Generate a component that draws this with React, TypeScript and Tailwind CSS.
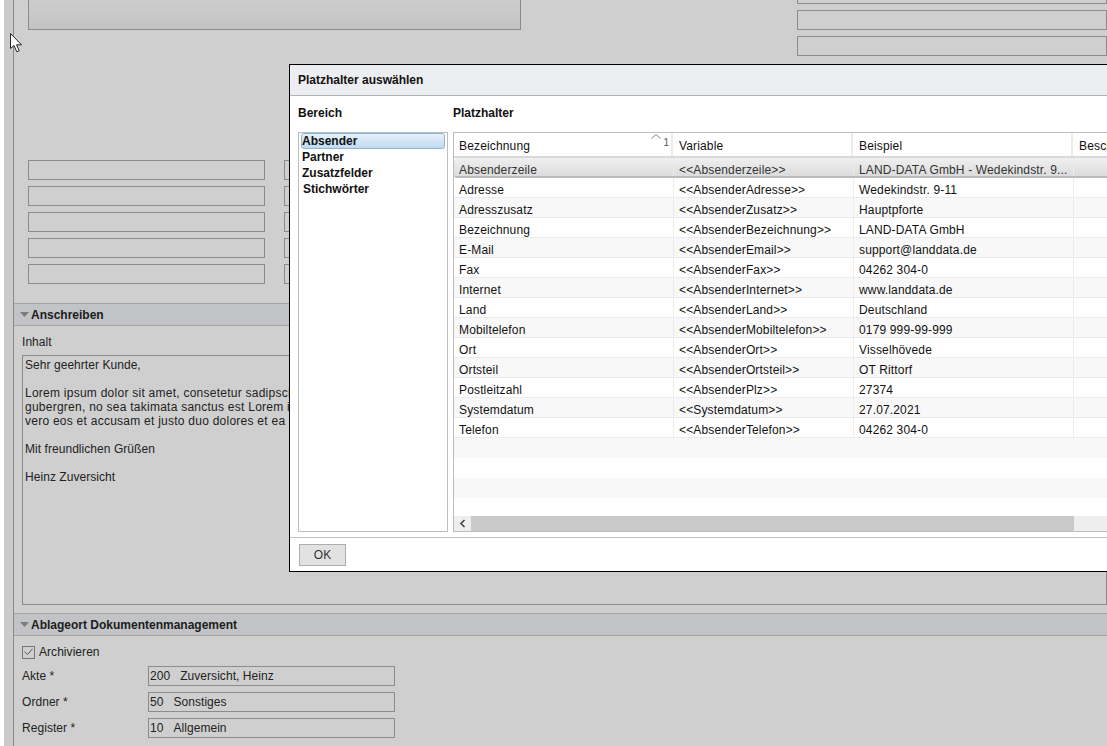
const rows = [
  ["Absenderzeile", "<<Absenderzeile>>", "LAND-DATA GmbH - Wedekindstr. 9..."],
  ["Adresse", "<<AbsenderAdresse>>", "Wedekindstr. 9-11"],
  ["Adresszusatz", "<<AbsenderZusatz>>", "Hauptpforte"],
  ["Bezeichnung", "<<AbsenderBezeichnung>>", "LAND-DATA GmbH"],
  ["E-Mail", "<<AbsenderEmail>>", "support@landdata.de"],
  ["Fax", "<<AbsenderFax>>", "04262 304-0"],
  ["Internet", "<<AbsenderInternet>>", "www.landdata.de"],
  ["Land", "<<AbsenderLand>>", "Deutschland"],
  ["Mobiltelefon", "<<AbsenderMobiltelefon>>", "0179 999-99-999"],
  ["Ort", "<<AbsenderOrt>>", "Visselhövede"],
  ["Ortsteil", "<<AbsenderOrtsteil>>", "OT Rittorf"],
  ["Postleitzahl", "<<AbsenderPlz>>", "27374"],
  ["Systemdatum", "<<Systemdatum>>", "27.07.2021"],
  ["Telefon", "<<AbsenderTelefon>>", "04262 304-0"],
]

function Field({ className = "", children }: { className?: string; children?: React.ReactNode }) {
  return (
    <div className={`h-5 shrink-0 border border-[#8c8c8c] px-[1px] leading-[18px] whitespace-nowrap ${className}`}>
      {children}
    </div>
  )
}

function SectionHeader({ title }: { title: string }) {
  return (
    <div className="flex h-[23px] items-center gap-[2px] border-y border-[#a3a3a3] bg-[#c1c3c7] pl-[6px]">
      <svg width="9" height="5" viewBox="0 0 9 5">
        <path d="M0 0h9L4.5 5z" fill="#7c7c7c" />
      </svg>
      <span className="font-bold tracking-normal text-[#1c1c1c]">{title}</span>
    </div>
  )
}

function Cell({ className = "", children }: { className?: string; children?: React.ReactNode }) {
  return <div className={`h-full shrink-0 overflow-hidden whitespace-nowrap ${className}`}>{children}</div>
}

export default function App() {
  return (
    <div className="relative flex h-[746px] w-[1107px] overflow-hidden bg-white font-['Liberation_Sans',Arial,sans-serif] text-[12px] tracking-[0.05px] text-[#222]">
      <div className="w-[4px] shrink-0 bg-white" />
      <div className="w-[9px] shrink-0 bg-[#cbcbcb]" />
      <div className="min-w-0 flex-1 border-l border-[#8c8c8c] bg-[#cfcfcf]">
        {/* top of the form, cut off by the window */}
        <div className="flex h-[160px] pl-[14px]">
          <div className="h-[30px] w-[493px] shrink-0 border-x border-b border-[#8c8c8c] bg-gradient-to-b from-[#cdcdcd] to-[#c3c3c3]" />
          <div className="ml-[276px] flex flex-1 flex-col gap-[6px]">
            <div className="h-1 border-x border-b border-[#8c8c8c]" />
            <Field />
            <Field />
          </div>
        </div>

        <div className="flex flex-col gap-[6px] pl-[14px]">
          {[0, 1, 2, 3, 4].map((i) => (
            <div key={i} className="flex gap-[19px]">
              <Field className="w-[237px]" />
              <Field className="w-[237px]" />
            </div>
          ))}
        </div>

        <div className="mt-[19px]">
          <SectionHeader title="Anschreiben" />
        </div>
        <div className="pl-[8px]">
          <div className="flex h-[29px] items-end pb-[6px] leading-[14px]">Inhalt</div>
          <div className="h-[250px] border border-[#8c8c8c] pl-[2px] pt-[2px] leading-[14px]">
            <div className="w-[264px] overflow-hidden whitespace-nowrap">
              <div>Sehr geehrter Kunde,</div>
              <div className="h-[14px]" />
              <div className="tracking-[0.25px]">Lorem ipsum dolor sit amet, consetetur sadipscing elitr</div>
              <div className="tracking-[0.25px]">gubergren, no sea takimata sanctus est Lorem ipsum</div>
              <div className="tracking-[0.25px]">vero eos et accusam et justo duo dolores et ea rebum</div>
              <div className="h-[14px]" />
              <div>Mit freundlichen Grüßen</div>
              <div className="h-[14px]" />
              <div>Heinz Zuversicht</div>
            </div>
          </div>
        </div>

        <div className="mt-[8px]">
          <SectionHeader title="Ablageort Dokumentenmanagement" />
        </div>
        <div className="pl-[8px]">
          <div className="flex h-[30px] items-center gap-[4px] pt-[2px]">
            <div className="flex h-[13px] w-[13px] items-center justify-center border border-[#777]">
              <svg width="9" height="8" viewBox="0 0 9 8" fill="none">
                <path d="M0.5 3.5l3 3L8.5 0.8" stroke="#555" strokeWidth="1" />
              </svg>
            </div>
            <span>Archivieren</span>
          </div>
          <div className="flex flex-col gap-[6px]">
            {[
              ["Akte *", "200", "Zuversicht, Heinz"],
              ["Ordner *", "50", "Sonstiges"],
              ["Register *", "10", "Allgemein"],
            ].map(([label, num, value]) => (
              <div key={label} className="flex items-center">
                <div className="w-[126px] shrink-0">{label}</div>
                <Field className="w-[247px]">
                  {num}
                  <span className="ml-[10px]">{value}</span>
                </Field>
              </div>
            ))}
          </div>
        </div>
      </div>

      {/* mouse pointer */}
      <svg className="absolute left-[10px] top-[33px]" width="13" height="20" viewBox="0 0 13 20">
        <path d="M0.5 0.5V15.5L4 12.5L6.8 18.8L9.2 17.7L6.5 11.8H11.5Z" fill="#fff" stroke="#222" strokeWidth="1" />
      </svg>

      {/* dialog */}
      <div className="absolute left-[289px] top-[64px] flex h-[508px] w-[840px] flex-col border border-black bg-white text-[#111]">
        <div className="flex h-[31px] shrink-0 items-center border-b border-[#b4b4b4] bg-[#eceef1] pl-[8px] font-bold tracking-normal">
          Platzhalter auswählen
        </div>
        <div className="flex h-[36px] shrink-0 items-center pb-[2px] pl-[8px] font-bold tracking-normal">
          <div className="w-[155px]">Bereich</div>
          <div>Platzhalter</div>
        </div>
        <div className="flex h-[400px] shrink-0 gap-[5px] pl-[8px]">
          <div className="h-full w-[150px] shrink-0 border border-[#bdbdbd] px-[2px] font-bold leading-[16px] tracking-normal">
            <div className="h-[16px] rounded-[3px] border border-[#8fb4d6] bg-gradient-to-b from-[#e6f0f9] to-[#c0dbf2] leading-[14px]">
              Absender
            </div>
            <div className="pl-[1px]">Partner</div>
            <div className="pl-[1px]">Zusatzfelder</div>
            <div className="pl-[2px]">Stichwörter</div>
          </div>
          <div className="flex h-full min-w-0 flex-1 flex-col border border-[#bdbdbd] tracking-[0.15px]">
            <div className="flex h-[25px] shrink-0 items-center border-b-2 border-[#d9d9d9]">
              <Cell className="relative w-[219px] border-r-2 border-[#ececec] pl-[5px] leading-[26px]">
                Bezeichnung
                <svg className="absolute right-[10px] top-[1px]" width="10" height="5" viewBox="0 0 10 5" fill="none">
                  <path d="M0.5 4.5L5 0.5L9.5 4.5" stroke="#888" />
                </svg>
                <span className="absolute right-[2px] top-[4px] text-[10px] leading-[12px] tracking-normal text-[#555]">1</span>
              </Cell>
              <Cell className="w-[180px] border-r-2 border-[#ececec] pl-[6px] leading-[26px]">Variable</Cell>
              <Cell className="w-[220px] border-r-2 border-[#ececec] pl-[6px] leading-[26px]">Beispiel</Cell>
              <Cell className="w-[60px] pl-[6px] leading-[26px]">Beschreibung</Cell>
            </div>
            {rows.map((r, i) => (
              <div
                key={r[0]}
                className={
                  i === 0
                    ? "flex h-[20px] shrink-0 items-center rounded-l-[3px] border-b-2 border-[#bbb] bg-gradient-to-b from-[#efefef] to-[#dcdcdc] leading-[24px] text-[#333]"
                    : `flex h-[20px] shrink-0 items-center border-b border-[#ececec] leading-[24px] ${i % 2 === 0 ? "bg-[#f8f8f8]" : "bg-white"}`
                }
              >
                <Cell className="w-[220px] border-r border-[#ececec] pl-[5px]">{r[0]}</Cell>
                <Cell className="w-[180px] border-r border-[#ececec] pl-[5px]">{r[1]}</Cell>
                <Cell className="w-[220px] border-r border-[#ececec] pl-[5px]">{r[2]}</Cell>
              </div>
            ))}
            <div className="h-[20px] shrink-0 bg-[#f8f8f8]" />
            <div className="h-[20px] shrink-0 bg-white" />
            <div className="h-[20px] shrink-0 bg-[#f8f8f8]" />
            <div className="min-h-0 flex-1 bg-white" />
            <div className="flex h-[15px] shrink-0 bg-[#eeeeee]">
              <div className="flex w-[17px] shrink-0 items-center justify-center">
                <svg width="7" height="9" viewBox="0 0 7 9" fill="none">
                  <path d="M5.5 1L2 4.5L5.5 8" stroke="#444" strokeWidth="1.6" />
                </svg>
              </div>
              <div className="w-[603px] shrink-0 bg-[#c9c9c9]" />
            </div>
          </div>
        </div>
        <div className="mt-[5px] flex-1 border-t border-[#c4c4c4] pl-[9px] pt-[6px]">
          <div className="flex h-[22px] w-[47px] items-center justify-center border border-[#adadad] bg-[#e2e2e2] text-[12px] text-[#333]">
            OK
          </div>
        </div>
      </div>
    </div>
  )
}
